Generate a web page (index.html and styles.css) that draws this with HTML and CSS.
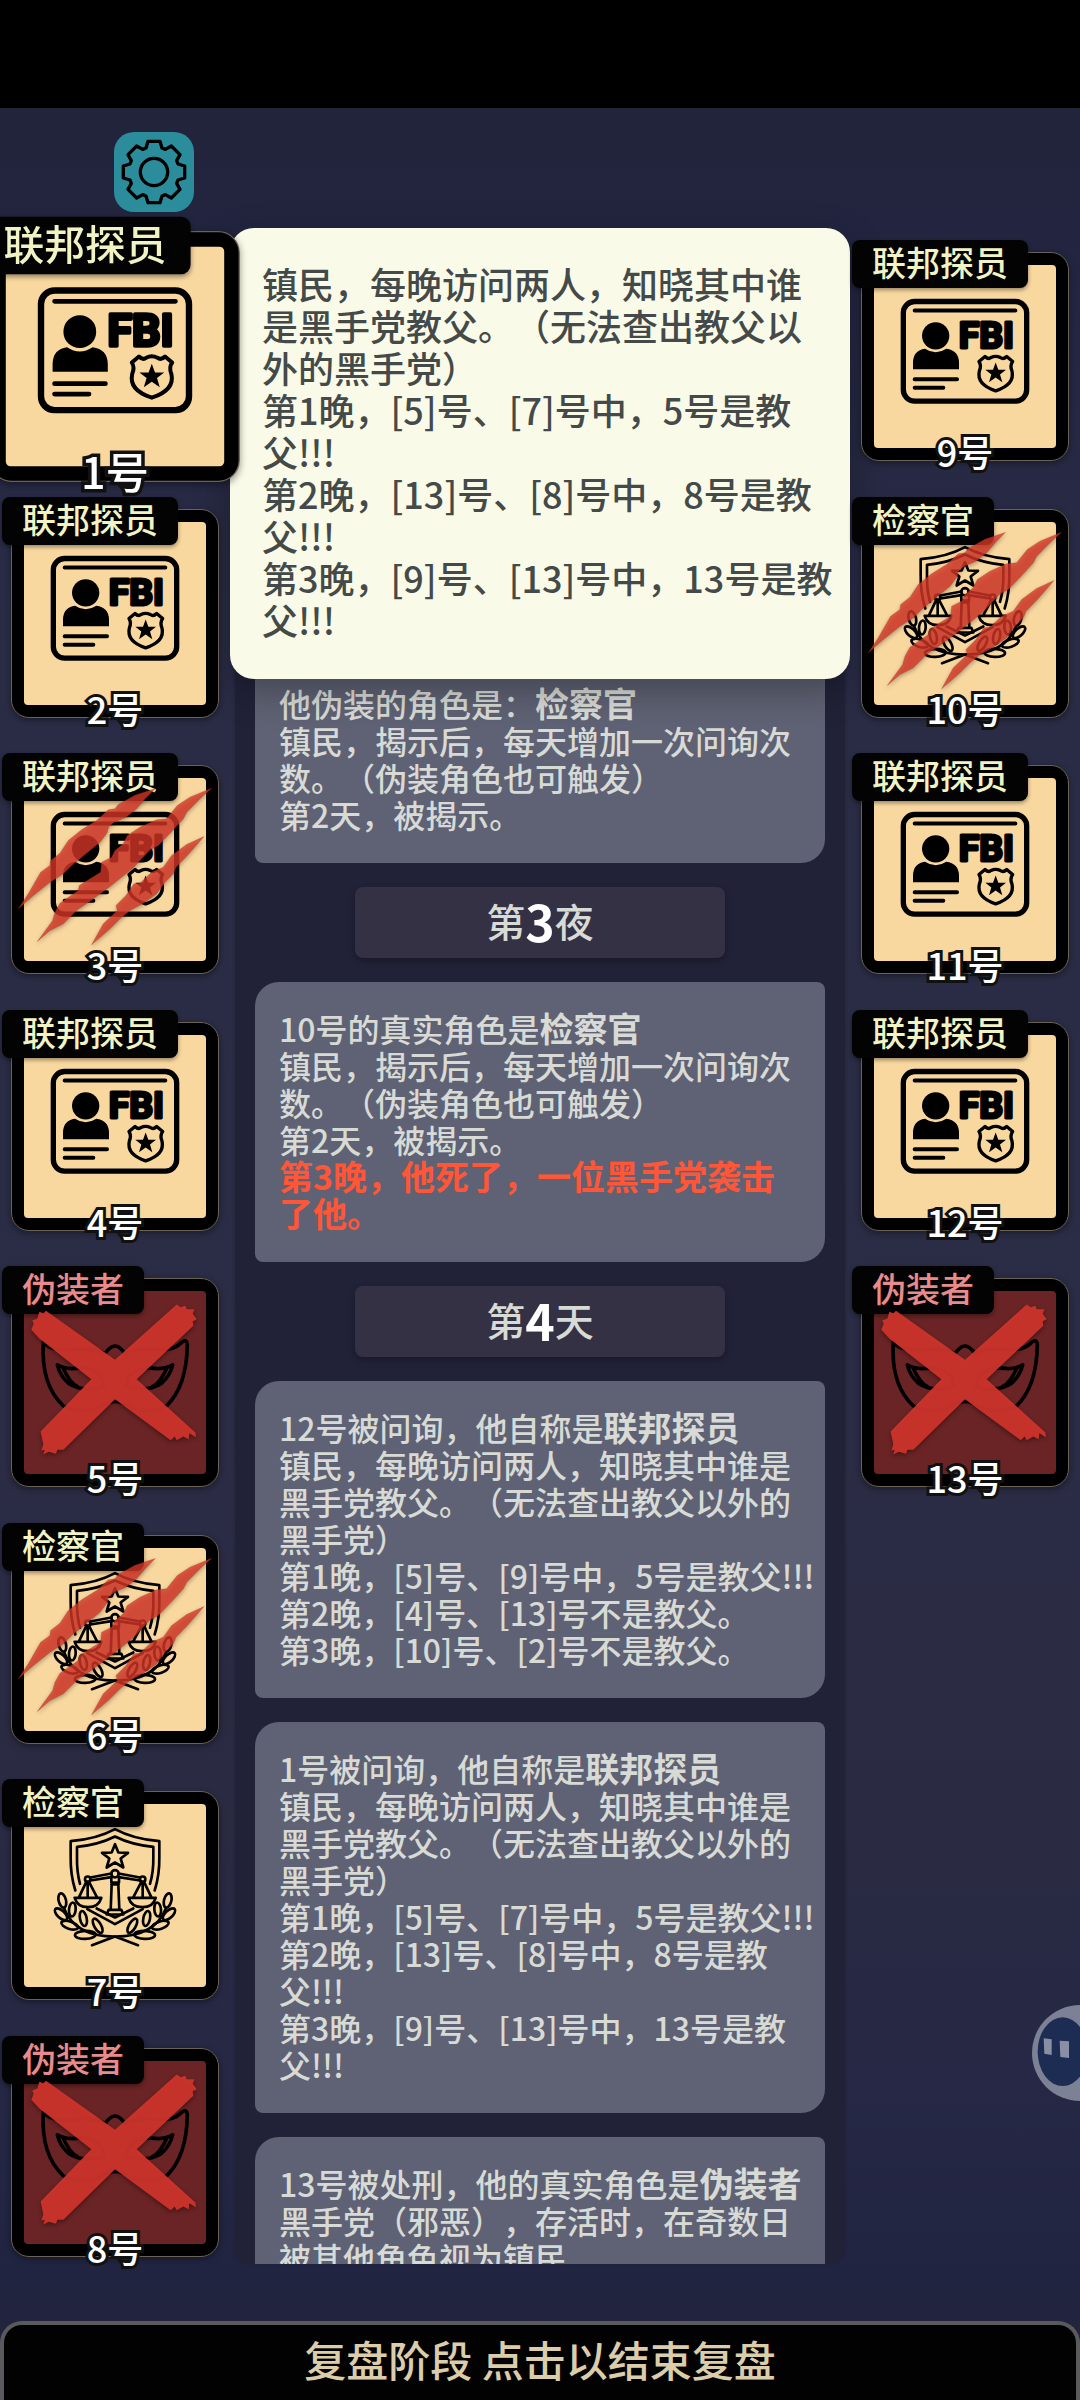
FILE: index.html
```html
<!DOCTYPE html>
<html lang="zh-CN">
<head>
<meta charset="utf-8">
<meta name="viewport" content="width=device-width, initial-scale=1">
<title>复盘阶段</title>
<link rel="stylesheet" href="styles.css">
</head>
<body>
<svg class="sprite" aria-hidden="true">
  <symbol id="fbi" viewBox="72 95 546 546">
    <rect x="160" y="203" width="370" height="299" rx="34" fill="none" stroke="#000" stroke-width="16"/>
    <path d="M194 230H496M194 436H321M194 462H280" fill="none" stroke="#000" stroke-width="12" stroke-linecap="round"/>
    <circle cx="257" cy="306" r="41"/>
    <path d="M189 406V386Q190 350 225 345Q257 366 289 345Q326 350 327 386V406Z"/>
    <text class="fbi-word" x="326" y="343">FBI</text>
    <path d="M405 368Q415 378 423 371Q437 364 451 371Q460 378 470 368L488 383Q479 395 486 412Q495 452 437 471Q379 452 388 412Q395 395 387 383Z" fill="none" stroke="#000" stroke-width="10" stroke-linejoin="round"/>
    <path d="M437 386L445 408L468 408L450 422L457 445L437 431L417 445L424 422L406 408L429 408Z"/>
  </symbol>
  <symbol id="scale" viewBox="72 894 546 546">
    <g fill="none" stroke="#000" stroke-width="8" stroke-linecap="round" stroke-linejoin="round">
      <path d="M226 1152Q211 1105 212 1050V1004Q290 998 345 968Q400 998 478 1004V1050Q479 1105 464 1152"/>
      <path d="M240 1132Q230 1095 231 1050V1021Q295 1015 345 990Q395 1015 460 1021V1050Q461 1095 450 1132"/>
      <path d="M262 1208L345 1253L428 1208M290 1206L345 1233L400 1206"/>
      <path d="M345 1013L355 1038L384 1039L362 1056L370 1083L345 1068L320 1083L328 1056L306 1039L335 1038Z"/>
      <circle cx="345" cy="1102" r="11"/>
      <path d="M334 1112V1128H357V1112M335 1134L332 1210M355 1134L358 1210M334 1134H356M326 1210H364L370 1224H320Z"/>
      <path d="M271 1113L334 1101M271 1122L334 1112M356 1101L420 1113M356 1112L420 1122"/>
      <circle cx="263" cy="1118" r="8"/><circle cx="428" cy="1118" r="8"/>
      <path d="M259 1126L236 1174M267 1126L292 1174M263 1126V1172M224 1174H304Q296 1202 264 1202Q232 1202 224 1174Z"/>
      <path d="M424 1126L399 1174M432 1126L455 1174M428 1126V1172M386 1174H467Q460 1202 427 1202Q394 1202 386 1174Z"/>
      <g id="laurel">
        <path d="M192 1205Q225 1290 345 1290L276 1316"/>
        <ellipse cx="187" cy="1182" rx="11" ry="22" transform="rotate(-14 187 1182)"/>
        <ellipse cx="183" cy="1223" rx="11" ry="23" transform="rotate(-48 183 1223)"/>
        <ellipse cx="217" cy="1209" rx="10" ry="21" transform="rotate(5 217 1209)"/>
        <ellipse cx="209" cy="1256" rx="11" ry="26" transform="rotate(-72 209 1256)"/>
        <ellipse cx="250" cy="1236" rx="10" ry="23" transform="rotate(-12 250 1236)"/>
        <ellipse cx="256" cy="1285" rx="12" ry="31" transform="rotate(-92 256 1285)"/>
        <ellipse cx="293" cy="1258" rx="10" ry="24" transform="rotate(-30 293 1258)"/>
      </g>
      <use href="#laurel" transform="translate(690 0) scale(-1 1)"/>
    </g>
  </symbol>
  <symbol id="mask" viewBox="72 125 546 546">
    <g fill="none" stroke="#000" stroke-width="11" stroke-linecap="round" stroke-linejoin="round">
      <path d="M130 277Q122 405 190 468Q250 495 300 470Q325 455 345 455Q365 455 390 470Q440 495 500 468Q560 410 562 285Q560 262 540 282Q520 302 465 299Q410 290 375 312Q345 265 315 312Q280 290 215 300Q150 304 130 277Z"/>
      <path id="eye" d="M172 345Q195 360 235 355Q305 352 313 410Q245 428 205 400Q180 378 172 345ZM188 352Q210 400 232 410"/>
      <use href="#eye" transform="translate(690 0) scale(-1 1)"/>
    </g>
  </symbol>
  <symbol id="cross" viewBox="72 125 546 546">
    <path fill="#d0352c" fill-opacity=".93" d="M94 240L101 222L97 212L112 206L118 186L130 190L138 183L345 330L530 164L542 172L556 168L560 178L583 178L578 192L590 208L578 214L580 228L410 388L586 548L588 562L568 550L566 568L550 560L530 571L524 560L512 571L345 448L190 600L172 600L168 612L146 606L130 614L134 600L124 602L130 584L122 545L274 388L118 266Z"/>
  </symbol>
  <symbol id="claws" viewBox="72 894 546 546">
    <g fill="#d83627" fill-opacity=".78" stroke="#8a3020" stroke-opacity=".4" stroke-width="2">
      <path d="M466 924L405 944L355 972L345 985L325 988L290 1020L245 1048L205 1080L180 1118L152 1140L150 1155L122 1175L85 1240L55 1285L100 1245L150 1205L190 1180L215 1155L245 1130L300 1085L322 1056L325 1040L342 1025L378 1010L410 985L435 955Z"/>
      <path d="M635 923L570 950L532 975L500 1015L470 1018L420 1040L382 1065L370 1090L345 1110L335 1130L305 1145L302 1175L270 1195L238 1215L235 1230L180 1268L165 1295L158 1320L112 1383L150 1350L190 1330L232 1288L270 1262L330 1218L400 1162L450 1108L475 1095L520 1048L550 1015L560 995L600 955Z"/>
      <path d="M612 1068L560 1092L515 1125L490 1160L455 1175L420 1208L402 1210L378 1245L348 1275L352 1290L310 1330L275 1393L330 1345L360 1315L390 1290L430 1268L470 1240L495 1205L520 1180L528 1160L562 1125Z"/>
    </g>
  </symbol>
</svg>

<div class="app">
  <div class="statusbar"></div>
  <header class="topbar">
    <button class="settings" type="button" aria-label="设置">
      <svg viewBox="-120 -120 240 240" fill="none" stroke="#000" stroke-width="10" stroke-linejoin="round">
        <circle r="41"/>
        <path d="M-24-72L-18-92H18L24-72L34-68L52-78L78-52L68-34L72-24L92-18V18L72 24L68 34L78 52L52 78L34 68L24 72L18 92H-18L-24 72L-34 68L-52 78L-78 52L-68 34L-72 24L-92 18V-18L-72-24L-68-34L-78-52L-52-78L-34-68Z"/>
      </svg>
    </button>
  </header>

  <main class="board">
    <div class="seats">
      <button class="seat selected" type="button"><svg class="pic"><use href="#fbi"/></svg><span class="role">联邦探员</span><span class="num">1号</span></button>
      <button class="seat" type="button"><svg class="pic"><use href="#fbi"/></svg><span class="role">联邦探员</span><span class="num">2号</span></button>
      <button class="seat" type="button"><svg class="pic"><use href="#fbi"/></svg><span class="role">联邦探员</span><svg class="wound"><use href="#claws"/></svg><span class="num">3号</span></button>
      <button class="seat" type="button"><svg class="pic"><use href="#fbi"/></svg><span class="role">联邦探员</span><span class="num">4号</span></button>
      <button class="seat evil" type="button"><svg class="pic"><use href="#mask"/></svg><span class="role">伪装者</span><svg class="wound"><use href="#cross"/></svg><span class="num">5号</span></button>
      <button class="seat" type="button"><svg class="pic"><use href="#scale"/></svg><span class="role">检察官</span><svg class="wound"><use href="#claws"/></svg><span class="num">6号</span></button>
      <button class="seat" type="button"><svg class="pic"><use href="#scale"/></svg><span class="role">检察官</span><span class="num">7号</span></button>
      <button class="seat evil" type="button"><svg class="pic"><use href="#mask"/></svg><span class="role">伪装者</span><svg class="wound"><use href="#cross"/></svg><span class="num">8号</span></button>
    </div>

    <div class="center">
      <section class="log">
        <p class="entry">他伪装的角色是：<b>检察官</b><br>镇民，揭示后，每天增加一次问询次数。（伪装角色也可触发）<br>第2天，被揭示。</p>
        <h2 class="phase">第<b>3</b>夜</h2>
        <p class="entry">10号的真实角色是<b>检察官</b><br>镇民，揭示后，每天增加一次问询次数。（伪装角色也可触发）<br>第2天，被揭示。<br><b class="death">第3晚，他死了，一位黑手党袭击<br>了他。</b></p>
        <h2 class="phase">第<b>4</b>天</h2>
        <p class="entry">12号被问询，他自称是<b>联邦探员</b><br>镇民，每晚访问两人，知晓其中谁是黑手党教父。（无法查出教父以外的黑手党）<br>第1晚，[5]号、[9]号中，5号是教父!!!<br>第2晚，[4]号、[13]号不是教父。<br>第3晚，[10]号、[2]号不是教父。</p>
        <p class="entry">1号被问询，他自称是<b>联邦探员</b><br>镇民，每晚访问两人，知晓其中谁是黑手党教父。（无法查出教父以外的黑手党）<br>第1晚，[5]号、[7]号中，5号是教父!!!<br>第2晚，[13]号、[8]号中，8号是教父!!!<br>第3晚，[9]号、[13]号中，13号是教父!!!</p>
        <p class="entry">13号被处刑，他的真实角色是<b>伪装者</b><br>黑手党（邪恶），存活时，在奇数日被其他角色视为镇民</p>
      </section>
      <div class="popup" role="tooltip">镇民，每晚访问两人，知晓其中谁是黑手党教父。（无法查出教父以外的黑手党）<br>第1晚，[5]号、[7]号中，5号是教父!!!<br>第2晚，[13]号、[8]号中，8号是教父!!!<br>第3晚，[9]号、[13]号中，13号是教父!!!</div>
    </div>

    <div class="seats">
      <button class="seat" type="button"><svg class="pic"><use href="#fbi"/></svg><span class="role">联邦探员</span><span class="num">9号</span></button>
      <button class="seat" type="button"><svg class="pic"><use href="#scale"/></svg><span class="role">检察官</span><svg class="wound"><use href="#claws"/></svg><span class="num">10号</span></button>
      <button class="seat" type="button"><svg class="pic"><use href="#fbi"/></svg><span class="role">联邦探员</span><span class="num">11号</span></button>
      <button class="seat" type="button"><svg class="pic"><use href="#fbi"/></svg><span class="role">联邦探员</span><span class="num">12号</span></button>
      <button class="seat evil" type="button"><svg class="pic"><use href="#mask"/></svg><span class="role">伪装者</span><svg class="wound"><use href="#cross"/></svg><span class="num">13号</span></button>
    </div>
  </main>

  <button class="finish" type="button">复盘阶段 点击以结束复盘</button>

  <button class="assist" type="button" aria-label="助手">
    <svg viewBox="0 0 288 288">
      <circle cx="144" cy="144" r="144" fill="#7c8195"/>
      <ellipse cx="92" cy="140" rx="75" ry="103" fill="#1d2c52"/>
      <path d="M35 100L59 103V150L37 146ZM83 107L111 109V159L85 156Z" fill="#8a90a4"/>
    </svg>
  </button>
</div>
</body>
</html>
```
FILE: styles.css
```css
* {
  box-sizing: border-box;
}

body {
  margin: 0;
  background: #000;
  font-family: "Noto Sans CJK SC", "Noto Sans", sans-serif;
  font-weight: 500;
  text-spacing-trim: space-all;
}

button {
  padding: 0;
  border: 0;
  font: inherit;
  text-spacing-trim: inherit;
  cursor: pointer;
}

.sprite {
  position: absolute;
  width: 0;
  height: 0;
}

.app {
  position: relative;
  display: flex;
  flex-direction: column;
  height: 100vh;
  overflow: hidden;
  background: linear-gradient(#21243a 5%, #232540 10%, #2a2c46 25%, #2b2c45 60%, #2a2a42 76%, #262845 86%, #212440 95%, #252538);
}

.statusbar {
  flex: none;
  height: 108px;
  background: #000;
}

.topbar {
  flex: none;
  padding: 24px 114px 40px;
}

.settings {
  display: block;
  width: 80px;
  height: 80px;
  border-radius: 20px;
  background: #2b8c9b;
}

.settings svg,
.assist svg {
  display: block;
  width: 100%;
  height: 100%;
}

.board {
  flex: 1;
  min-height: 0;
  display: grid;
  grid-template-columns: 208px minmax(0, 1fr) 208px;
  grid-template-rows: minmax(0, 1fr);
  gap: 16px;
  padding: 0 11px 17px;
}

.seats {
  position: relative;
  z-index: 3;
  display: grid;
  grid-template-rows: repeat(8, minmax(0, 1fr));
}

.seat {
  position: relative;
  width: 208px;
  height: 209px;
  border: 1px solid #6a6254;
  border-radius: 18px;
  padding: 12px;
  background: #000;
  box-shadow: 0 2px 6px rgba(0, 0, 0, .4);
}

.selected {
  transform: scale(1.2);
}

.pic {
  display: block;
  width: 182px;
  height: 183px;
  border-radius: 4px;
  background: #f9d8a0;
}

.evil .pic {
  background: #6a2425;
}

.wound {
  position: absolute;
  top: 12px;
  left: 12px;
  width: 182px;
  height: 183px;
  overflow: visible;
  filter: drop-shadow(0 2px 2px rgba(0, 0, 0, .4));
}

#claws {
  overflow: visible;
}

.fbi-word {
  font-family: Roboto, "Liberation Sans", sans-serif;
  font-size: 112px;
  font-weight: 700;
  stroke: #000;
  stroke-width: 9px;
  stroke-linejoin: round;
}

.role {
  position: absolute;
  top: -13px;
  left: -10px;
  padding: 0 20px 4px;
  border-radius: 8px;
  background: #030303;
  box-shadow: 0 2px 4px rgba(0, 0, 0, .4);
  color: #f1f4c2;
  font-size: 34px;
  font-weight: 500;
  line-height: 44px;
  white-space: nowrap;
}

.evil .role {
  color: #e98a8b;
}

.num {
  position: absolute;
  right: 0;
  bottom: -13px;
  left: 0;
  color: #fff;
  font-size: 36px;
  font-weight: 500;
  line-height: 44px;
  text-align: center;
  -webkit-text-stroke: 6px #111;
  paint-order: stroke fill;
}

.center {
  position: relative;
  min-height: 0;
  padding-bottom: 40px;
}

.log {
  display: flex;
  flex-direction: column;
  gap: 24px;
  height: 100%;
  overflow: hidden;
  padding: 405px 20px 0;
  border-radius: 16px;
  background: #212238;
  box-shadow: 0 0 3px #212238;
}

.entry {
  flex: none;
  margin: 0;
  padding: 28px 8px 30px 24px;
  border-radius: 24px 8px 24px 8px;
  background: #5f6274;
  color: #d8dad5;
  font-size: 32px;
  line-height: 37px;
}

.entry b {
  font-size: 34px;
  font-weight: 700;
  line-height: 32px;
}

.entry .death {
  color: #ff5637;
}

.phase {
  flex: none;
  align-self: center;
  display: flex;
  align-items: center;
  justify-content: center;
  width: 370px;
  max-width: 100%;
  height: 71px;
  margin: 0;
  padding-bottom: 4px;
  border-radius: 8px;
  background: #343144;
  box-shadow: 0 3px 6px rgba(0, 0, 0, .3);
  color: #d8dad5;
  font-size: 39px;
  font-weight: 500;
  line-height: 67px;
}

.phase b {
  color: #fff;
  font-size: 50px;
}

.popup {
  position: absolute;
  z-index: 2;
  top: -24px;
  right: -5px;
  left: -5px;
  padding: 34px 14px 39px 32px;
  border-radius: 24px;
  background: #fafae8;
  box-shadow: 0 12px 36px rgba(0, 0, 0, .3);
  color: #434a49;
  font-size: 36px;
  line-height: 42px;
}

.finish {
  flex: none;
  height: 79px;
  padding-bottom: 8px;
  border: 4px solid #5a5a5e;
  border-bottom: 0;
  border-radius: 22px 22px 0 0;
  background: #030202;
  color: #dccdaa;
  font-size: 42px;
  line-height: 64px;
}

.assist {
  position: absolute;
  right: -48px;
  bottom: 299px;
  width: 96px;
  height: 96px;
  border-radius: 50%;
  background: none;
}
```
